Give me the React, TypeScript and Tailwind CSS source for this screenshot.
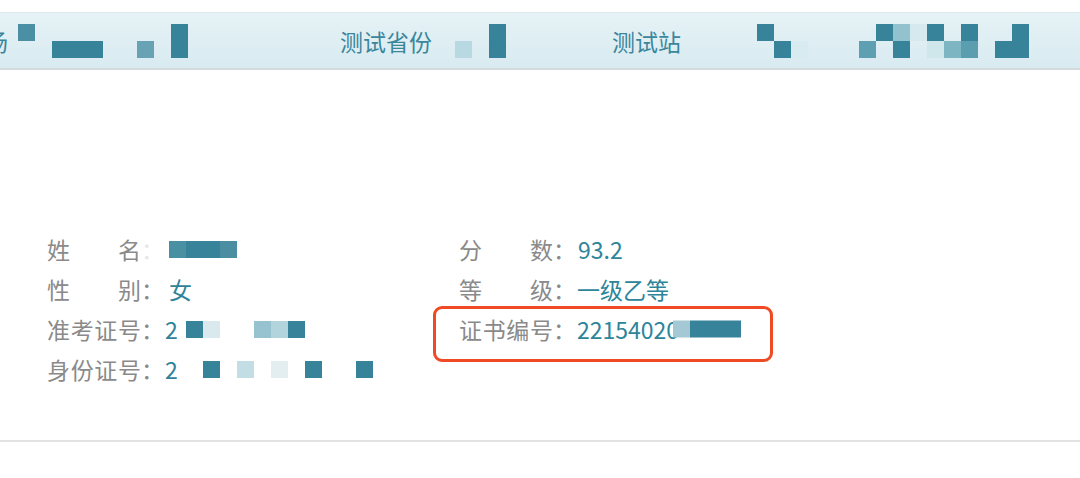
type Cell = string | null;

const ROW = "flex h-[17px]";

function Mosaic({ top, bottom }: { top?: Cell[]; bottom?: Cell[] }) {
  const rows = [top, bottom].filter(Boolean) as Cell[][];
  return (
    <div className="flex flex-col">
      {rows.map((cells, r) => (
        <div key={r} className={ROW}>
          {cells.map((c, i) => (
            <span key={i} className={`w-[17px] h-[17px] ${c ?? ""}`} />
          ))}
        </div>
      ))}
    </div>
  );
}

const D = "bg-[#37849a]";

function Label({ text, dim }: { text: string; dim?: boolean }) {
  const chars = text.split("");
  return (
    <span className="flex shrink-0 text-[#8a8a8a]">
      <span className="flex w-[94px] justify-between">
        {chars.map((c, i) => (
          <span key={i}>{c}</span>
        ))}
      </span>
      <span className={`w-[24px] ${dim ? "opacity-20" : ""}`}>：</span>
    </span>
  );
}

function Row({ label, dim, children }: { label: string; dim?: boolean; children?: React.ReactNode }) {
  return (
    <div className="flex h-[40px] items-center">
      <Label text={label} dim={dim} />
      <div className="flex items-center">{children}</div>
    </div>
  );
}

export default function App() {
  return (
    <div className="h-[478px] w-[1080px] overflow-hidden bg-white font-['Noto_Sans_CJK_SC','Noto_Sans',sans-serif] text-[23px] leading-[40px]">
      {/* Header strip */}
      <div className="mt-[12px] flex h-[58px] items-center border-t border-b-2 border-t-[#d9e9ee] border-b-[#d4dadc] bg-gradient-to-b from-[#e6f2f6] to-[#d8ebf1] text-[#3b869b]">
        <span className="-ml-[15px] w-[23px] shrink-0 overflow-hidden">场</span>
        <div className="ml-[10px]">
          <Mosaic
            top={["bg-[#4a8fa3]", null, null, null, null, null, null, null, null, D]}
            bottom={[null, null, D, D, D, null, null, "bg-[#67a3b4]", null, D]}
          />
        </div>
        <span className="ml-[152px] shrink-0">测试省份</span>
        <div className="ml-[23px]">
          <Mosaic top={[null, null, D]} bottom={["bg-[#b8d9e1]", null, D]} />
        </div>
        <span className="ml-[106px] shrink-0">测试站</span>
        <div className="ml-[76px]">
          <Mosaic
            top={[D, null, null, null, null, null, null, D, "bg-[#92c2ce]", "bg-[#d5e9ee]", D, null, D, null, null, D]}
            bottom={[null, D, "bg-[#d8ebf0]", null, null, null, "bg-[#5e9fb1]", null, D, null, "bg-[#cfe6eb]", "bg-[#7db5c3]", "bg-[#5b9eaf]", null, D, D]}
          />
        </div>
      </div>

      {/* Info grid */}
      <div className="mt-[159px] flex pl-[47px]">
        <div className="w-[412px] text-[#2e8499]">
          <Row label="姓  名" dim>
            <div className="ml-[4px]">
              <Mosaic top={["bg-[#4a90a3]", D, D, "bg-[#4a8ea1]"]} />
            </div>
          </Row>
          <Row label="性  别">
            <span className="ml-[4px]">女</span>
          </Row>
          <Row label="准考证号">
            <span className="w-[21px]">2</span>
            <Mosaic top={[D, "bg-[#d9e9ee]", null, null, "bg-[#97c2cf]", "bg-[#b2d5dd]", D]} />
          </Row>
          <Row label="身份证号">
            <span className="w-[38px]">2</span>
            <Mosaic top={[D, null, "bg-[#c3dde4]", null, "bg-[#e3eef1]", null, D, null, null, D]} />
          </Row>
        </div>

        <div className="text-[#2e8499]">
          <Row label="分  数">
            <span className="ml-[1px]">93.2</span>
          </Row>
          <Row label="等  级">
            <span>一级乙等</span>
          </Row>
          <div className="relative">
            <div className="pointer-events-none absolute -left-[26px] -top-[3px] h-[56px] w-[340px] rounded-[9px] border-[3px] border-[#f04a24]" />
            <Row label="证书编号">
              <span className="relative whitespace-nowrap">
                22154020
                <span className="absolute left-[96px] top-1/2 -translate-y-1/2">
                  <Mosaic top={["bg-[#a5c9d4]", D, D, D]} />
                </span>
              </span>
            </Row>
          </div>
        </div>
      </div>

      <div className="mt-[51px] h-[2px] bg-[#e2e2e2]" />
    </div>
  );
}
